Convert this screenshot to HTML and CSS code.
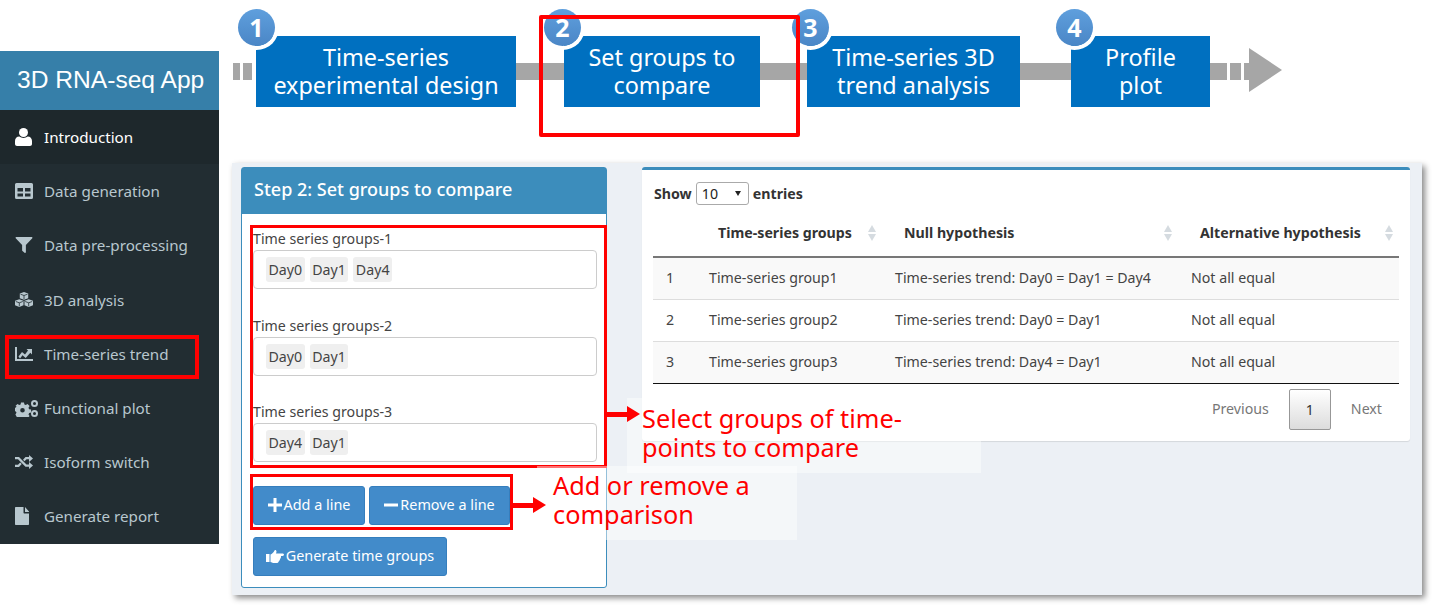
FILE: index.html
```html
<!DOCTYPE html>
<html lang="en">
<head>
<meta charset="UTF-8">
<title>3D RNA-seq App</title>
<link rel="stylesheet" href="styles.css">
</head>
<body>
<div class="page">

<aside class="sidebar">
    <div class="logo">3D RNA-seq App</div>
    <ul class="menu">
        <li class="active">
            <svg class="icon-user" viewBox="0 0 17 18"><circle cx="8.500" cy="4.500" r="4.500"/><path d="M0 16v-3c0-2.500 1.800-4.500 4.300-4.500 1.200.9 2.600 1.400 4.200 1.400s3-.5 4.200-1.400c2.500 0 4.300 2 4.300 4.500v3c0 1.200-.9 2-2 2H2c-1.100 0-2-.8-2-2z"/></svg>
            <span>Introduction</span>
        </li>
        <li>
            <svg class="icon-table" viewBox="0 0 18 16"><path fill-rule="evenodd" d="M1.500 0h15A1.500 1.500 0 0 1 18 1.500v13a1.500 1.500 0 0 1-1.500 1.500h-15A1.500 1.500 0 0 1 0 14.500v-13A1.500 1.500 0 0 1 1.500 0zM2.500 5v3.500H8V5zm7.500 0v3.500h5.500V5zm-7.500 5.500V13.500H8v-3zm7.500 0v3h5.500v-3z"/></svg>
            <span>Data generation</span>
        </li>
        <li>
            <svg class="icon-table" viewBox="0 0 18 17"><path d="M.7 0h16.600c.6 0 .9.700.5 1.200L11 8.500V16c0 .8-.8 1.200-1.400.7l-2.200-1.800c-.3-.2-.4-.5-.4-.8V8.500L.2 1.200C-.2.700.100 0 .7 0z"/></svg>
            <span>Data pre-processing</span>
        </li>
        <li>
            <svg class="icon-cubes" viewBox="0 0 18 15"><path d="M9 0l4.200 1.500v4.700L9 7.800 4.800 6.200V1.500zM4.300 7.300l4.200 1.500v4.500L4.300 15 0 13.300V8.800zm9.400 0L18 8.800v4.500L13.700 15l-4.200-1.700V8.800z"/><path class="cut" d="M5.500 2.200L9 3.500l3.500-1.300M9 3.500v3.500M.8 9.500l3.500 1.300 3.500-1.300M4.300 10.800v3.500M10.200 9.500l3.500 1.300 3.500-1.300M13.700 10.800v3.500"/></svg>
            <span>3D analysis</span>
        </li>
        <li>
            <svg class="icon-table" viewBox="0 0 18 14"><path d="M0 0h2v12h16v2H0z"/><path d="M3.500 9.500L7 5l3 2.500L13 3.500l-1.500-1.500H17v5.500L15.300 5.800l-4.600 5.200-3.200-2.700L5 11.500z"/></svg>
            <span>Time-series trend</span>
        </li>
        <li>
            <svg class="icon-gears" viewBox="0 0 23 17"><path fill-rule="evenodd" d="M6 2.500h3l.4 2 1.400.6 1.700-1.100 2.100 2.100-1.100 1.700.6 1.400 2 .4v3l-2 .4-.6 1.400 1.100 1.700-2.100 2.100-1.700-1.100-1.400.6-.4 1H6l-.4-1-1.400-.6-1.700 1.100L.400 14.500l1.100-1.700-.6-1.400-2-.4v-3l2-.4.6-1.400L.4 6.100 2.500 4l1.700 1.100 1.400-.6zM7.500 8a2.300 2.300 0 1 0 0 4.600 2.300 2.300 0 0 0 0-4.600z"/><path fill-rule="evenodd" d="M19.500 0a3.500 3.500 0 1 1 0 7 3.500 3.500 0 0 1 0-7zm0 2a1.500 1.500 0 1 0 0 3 1.500 1.500 0 0 0 0-3zM19.500 10a3.500 3.500 0 1 1 0 7 3.500 3.500 0 0 1 0-7zm0 2a1.500 1.500 0 1 0 0 3 1.500 1.500 0 0 0 0-3z"/></svg>
            <span>Functional plot</span>
        </li>
        <li>
            <svg class="icon-table" viewBox="0 0 18 14"><path d="M0 2h4l7.500 7.500H14V7l4 3.500-4 3.500v-2.300h-3.500L3 4.300H0zM14 0l4 3.500L14 7V4.300h-2.500l-2 2L8 4.700 10.500 2H14zM0 9.700h3l2.200-2.200 1.500 1.500L4 12H0z"/></svg>
            <span>Isoform switch</span>
        </li>
        <li>
            <svg class="icon-file" viewBox="0 0 14 18"><path d="M0 1c0-.6.4-1 1-1h7.500v5.500c0 .6.400 1 1 1H14V17c0 .6-.4 1-1 1H1c-.6 0-1-.4-1-1zM10 0l4 4.500v.5h-4z"/></svg>
            <span>Generate report</span>
        </li>
    </ul>
</aside>

<main class="main">
    <div class="stepper">
        <span class="dash dash-a"></span>
        <span class="dash dash-b"></span>
        <div class="step step-1"><span class="num">1</span>Time-series<br>experimental design</div>
        <span class="line line-1"></span>
        <div class="step step-2"><span class="num">2</span>Set groups to<br>compare</div>
        <span class="line line-2"></span>
        <div class="step step-3"><span class="num">3</span>Time-series 3D<br>trend analysis</div>
        <span class="line line-3"></span>
        <div class="step step-4"><span class="num">4</span>Profile<br>plot</div>
        <span class="dash dash-c"></span>
        <span class="dash dash-d"></span>
        <span class="dash dash-e"></span>
        <span class="arrow-head"></span>
    </div>

    <div class="panel">
        <section class="box-form">
            <h3>Step 2: Set groups to compare</h3>
            <div class="form-body">
                <div class="group">
                    <label>Time series groups-1</label>
                    <div class="multi"><span class="chip">Day0</span><span class="chip">Day1</span><span class="chip">Day4</span></div>
                </div>
                <div class="group">
                    <label>Time series groups-2</label>
                    <div class="multi"><span class="chip">Day0</span><span class="chip">Day1</span></div>
                </div>
                <div class="group">
                    <label>Time series groups-3</label>
                    <div class="multi"><span class="chip">Day4</span><span class="chip">Day1</span></div>
                </div>
                <div class="btn-row">
                    <button class="btn btn-add"><svg viewBox="0 0 14 14"><path d="M5.500 0h3v5.500H14v3H8.500V14h-3V8.500H0v-3h5.500z"/></svg>Add a line</button>
                    <button class="btn btn-remove"><svg viewBox="0 0 14 14"><path d="M0 5.500h14v3H0z"/></svg>Remove a line</button>
                </div>
                <button class="btn btn-generate"><svg viewBox="0 0 18 14"><path d="M0 5h3.500v8H0zM4.500 5.500C6 5 7.500 3.500 8.500 1.500 9 .5 10.500 1 10.500 2.500c0 .8-.3 1.500-.5 2h6.500c.8 0 1.500.6 1.500 1.300S17.300 7 16.500 7H15c.2 1.600-.4 2.500-1 3 0 1-.5 1.800-1.200 2.200-.2 1-1 1.800-2.300 1.800H8c-1.500 0-2.500-.7-3.500-1z"/></svg>Generate time groups</button>
            </div>
        </section>

        <section class="box-table">
            <div class="length">
                <span>Show</span>
                <span class="select-wrap"><select><option>10</option><option>25</option><option>50</option></select></span>
                <span>entries</span>
            </div>
            <table>
                <thead>
                    <tr>
                        <th class="col-num"></th>
                        <th class="col-group"><span>Time-series groups</span><i class="sort"></i></th>
                        <th class="col-null"><span>Null hypothesis</span><i class="sort"></i></th>
                        <th class="col-alt"><span>Alternative hypothesis</span><i class="sort"></i></th>
                    </tr>
                </thead>
                <tbody>
                    <tr class="odd"><td>1</td><td>Time-series group1</td><td>Time-series trend: Day0 = Day1 = Day4</td><td>Not all equal</td></tr>
                    <tr><td>2</td><td>Time-series group2</td><td>Time-series trend: Day0 = Day1</td><td>Not all equal</td></tr>
                    <tr class="odd"><td>3</td><td>Time-series group3</td><td>Time-series trend: Day4 = Day1</td><td>Not all equal</td></tr>
                </tbody>
            </table>
            <div class="pager">
                <span class="pager-link">Previous</span>
                <span class="current">1</span>
                <span class="pager-link">Next</span>
            </div>
        </section>
    </div>
</main>

<!-- red call-outs drawn on top of the screenshot -->
<div class="mark mark-step"></div>
<div class="mark mark-menu"></div>
<div class="mark mark-groups"></div>
<div class="mark mark-buttons"></div>

<div class="note note-groups">Select groups of time-<br>points to compare</div>
<div class="note note-buttons">Add or remove a<br>comparison</div>
<span class="pointer pointer-groups"></span>
<span class="pointer pointer-buttons"></span>

</div>
</body>
</html>
```
FILE: styles.css
```css
html, body {
    margin: 0;
    background-color: #fff;
}
.page {
    position: relative;
    display: flex;
    align-items: flex-start;
    width: 1435px;
    height: 608px;
    overflow: hidden;
    font-family: "Noto Sans", Arial, sans-serif;
    font-size: 14.2px;
    color: #444;
}

/* sidebar */
.sidebar {
    width: 219px;
    flex: none;
    margin-top: 51px;
    background-color: #222d32;
}
.logo {
    height: 59px;
    line-height: 58px;
    padding-left: 17px;
    font-family: "Liberation Sans", Arial, sans-serif;
    font-size: 24.6px;
    color: #fff;
    background-color: #367fa9;
}
.menu {
    list-style: none;
    margin: 0;
    padding: 0;
}
.menu li {
    display: grid;
    grid-template-columns: 29px 1fr;
    align-items: center;
    height: 54.2px;
    padding-left: 15px;
    font-size: 15.2px;
    color: #b8c7ce;
}
.menu li.active {
    color: #fff;
    background-color: #1e282c;
}
.menu svg {
    display: block;
    fill: currentColor;
}
.menu .cut {
    fill: none;
    stroke: #222d32;
    stroke-width: 0.8;
}
.icon-user { width: 17px; height: 18px; }
.icon-table { width: 18px; height: 16px; }
.icon-cubes { width: 18px; height: 15px; }
.icon-gears { width: 23px; height: 17px; }
.icon-file { width: 14px; height: 18px; }

/* stepper */
.main {
    flex: 1;
    display: flex;
    flex-direction: column;
    min-width: 0;
}
.stepper {
    display: flex;
    align-items: center;
    height: 71px;
    margin-top: 36px;
    padding-left: 14px;
}
.dash, .line {
    height: 17px;
    flex: none;
    background-color: #a6a6a6;
}
.dash-a { width: 7px; margin-right: 3px; }
.dash-b { width: 9px; margin-right: 4px; }
.dash-c { width: 17px; margin-right: 3px; }
.dash-d { width: 11px; margin-right: 3px; }
.dash-e { width: 5px; }
.line-1 { width: 48px; }
.line-2 { width: 47px; }
.line-3 { width: 51px; }
.arrow-head {
    flex: none;
    margin-top: -3px;
    border-left: 33px solid #a6a6a6;
    border-top: 22px solid transparent;
    border-bottom: 22px solid transparent;
}
.step {
    position: relative;
    flex: none;
    box-sizing: border-box;
    height: 71px;
    padding-top: 7px;
    font-size: 23.4px;
    line-height: 28px;
    text-align: center;
    color: #fff;
    background-color: #0070c0;
}
.step-1 { width: 260px; }
.step-2 { width: 196px; }
.step-3 { width: 213px; }
.step-4 { width: 139px; }
.num {
    position: absolute;
    top: -27px;
    width: 37px;
    height: 37px;
    border-radius: 50%;
    font-size: 25px;
    font-weight: 700;
    line-height: 37px;
    color: #fff;
    background: linear-gradient(#5f9fdd, #4a86c6);
    box-shadow: 0 0 0 4px #fff;
}
.step-1 .num { left: -18px; }
.step-2 .num { left: -20px; }
.step-3 .num { left: -15px; }
.step-4 .num { left: -15px; }

/* grey dashboard panel */
.panel {
    display: flex;
    align-items: flex-start;
    gap: 35px;
    box-sizing: border-box;
    width: 1190px;
    height: 432px;
    margin: 56px 0 0 13px;
    padding: 4px 12px 4px 9px;
    background-color: #ecf0f5;
    box-shadow: 3px 3px 6px #8a8a8a;
}
.box-form {
    box-sizing: border-box;
    width: 366px;
    height: 421px;
    flex: none;
    background-color: #fff;
    border: 1px solid #3c8dbc;
    border-radius: 3px;
}
.box-form h3 {
    margin: 0;
    height: 46px;
    padding-left: 12px;
    font-size: 18px;
    font-weight: 500;
    line-height: 43px;
    color: #fff;
    background-color: #3c8dbc;
}
.form-body {
    padding: 13px 9px 0 11px;
}
.group {
    height: 86.500px;
}
.group label {
    display: block;
    height: 23px;
    line-height: 24px;
    color: #444;
}
.multi {
    display: flex;
    gap: 5px;
    box-sizing: border-box;
    height: 39px;
    padding: 6px 12px;
    background-color: #fff;
    border: 1px solid #ccc;
    border-radius: 4px;
}
.chip {
    padding: 0 2.5px;
    line-height: 25px;
    background-color: #efefef;
    border-radius: 3px;
}
.btn {
    display: inline-flex;
    align-items: center;
    justify-content: center;
    box-sizing: border-box;
    height: 39px;
    padding: 0 0 2px;
    font-family: inherit;
    font-size: 14.4px;
    color: #fff;
    background-color: #428bca;
    border: 1px solid #357ebd;
    border-radius: 3px;
}
.btn svg {
    width: 14px;
    height: 14px;
    margin: 2px 2px 0 0;
    fill: #fff;
}
.btn-row {
    display: flex;
    gap: 4px;
    margin-top: -1px;
}
.btn-add { width: 112px; }
.btn-remove { width: 141px; }
.btn-generate {
    width: 194px;
    margin-top: 12px;
}
.btn-generate svg { width: 18px; }

/* results table */
.box-table {
    box-sizing: border-box;
    width: 768px;
    height: 274px;
    flex: none;
    padding: 11px 11px 0;
    background-color: #fff;
    border-top: 3px solid #3c8dbc;
    border-radius: 3px;
    box-shadow: 0 1px 1px rgba(0, 0, 0, 0.1);
}
.length {
    display: flex;
    align-items: center;
    gap: 4px;
    height: 24px;
    padding-left: 1px;
    font-weight: 700;
    color: #333;
}
.select-wrap {
    position: relative;
    display: block;
    height: 23px;
}
.select-wrap::after {
    content: "";
    position: absolute;
    right: 8px;
    top: 9px;
    border-left: 3.5px solid transparent;
    border-right: 3.5px solid transparent;
    border-top: 5px solid #222;
}
.length select {
    display: block;
    width: 53px;
    height: 23px;
    padding: 0 0 0 5px;
    appearance: none;
    font-family: inherit;
    font-size: 14.2px;
    font-weight: 400;
    color: #222;
    background-color: #fff;
    border: 1px solid #aaa;
    border-radius: 3px;
}
table {
    width: 100%;
    border-collapse: collapse;
    table-layout: fixed;
    margin-top: 7px;
}
th {
    position: relative;
    height: 40px;
    padding: 0 0 4px;
    color: #333;
    text-align: left;
    border-bottom: 2px solid #777;
}
.col-num { width: 43px; }
.col-group { width: 186px; }
.col-null { width: 296px; }
th span { margin-left: 22px; }
.sort {
    position: absolute;
    right: 6px;
    top: 13px;
    width: 0;
    height: 0;
    border-left: 4px solid transparent;
    border-right: 4px solid transparent;
    border-bottom: 7px solid #d5dbe0;
}
.sort::after {
    content: "";
    position: absolute;
    left: -4px;
    top: 9px;
    border-left: 4px solid transparent;
    border-right: 4px solid transparent;
    border-top: 7px solid #d5dbe0;
}
td {
    height: 38px;
    padding: 0 0 3px 13px;
    border-bottom: 1px solid #ddd;
}
tr.odd td {
    background-color: #f9f9f9;
}
tbody tr:last-child td {
    border-bottom: 1px solid #111;
}
.pager {
    display: flex;
    align-items: center;
    justify-content: flex-end;
    gap: 20px;
    margin: 5px 0 0;
    padding-right: 17px;
    color: #777;
}
.pager-link {
    padding-bottom: 3px;
}
.pager .current {
    box-sizing: border-box;
    width: 42px;
    height: 41px;
    line-height: 39px;
    text-align: center;
    color: #333;
    background: linear-gradient(#fff, #dcdcdc);
    border: 1px solid #979797;
    border-radius: 2px;
}

/* red call-outs */
.mark {
    position: absolute;
    box-sizing: border-box;
    border: 3px solid #f00;
}
.mark-step { left: 539px; top: 15px; width: 261px; height: 122px; border-width: 4px; border-radius: 2px; }
.mark-menu { left: 5px; top: 335px; width: 194px; height: 44px; border-width: 4px; }
.mark-groups { left: 250px; top: 225px; width: 357px; height: 243px; }
.mark-buttons { left: 250px; top: 474px; width: 263px; height: 56px; }
.note {
    position: absolute;
    box-sizing: border-box;
    padding-left: 15px;
    font-size: 25.3px;
    line-height: 29px;
    color: #f00;
    background-color: rgba(255, 255, 255, 0.45);
}
.note-groups { left: 627px; top: 398px; width: 354px; height: 75px; padding-top: 6px; }
.note-buttons { left: 537px; top: 466px; width: 260px; height: 74px; padding-top: 5px; padding-left: 16px; }
.pointer {
    position: absolute;
    width: 20px;
    height: 5px;
    background-color: #f00;
}
.pointer::after {
    content: "";
    position: absolute;
    right: -13px;
    top: -6px;
    border-left: 13px solid #f00;
    border-top: 8px solid transparent;
    border-bottom: 8px solid transparent;
}
.pointer-groups { left: 607px; top: 412px; }
.pointer-buttons { left: 513px; top: 503px; }
```
